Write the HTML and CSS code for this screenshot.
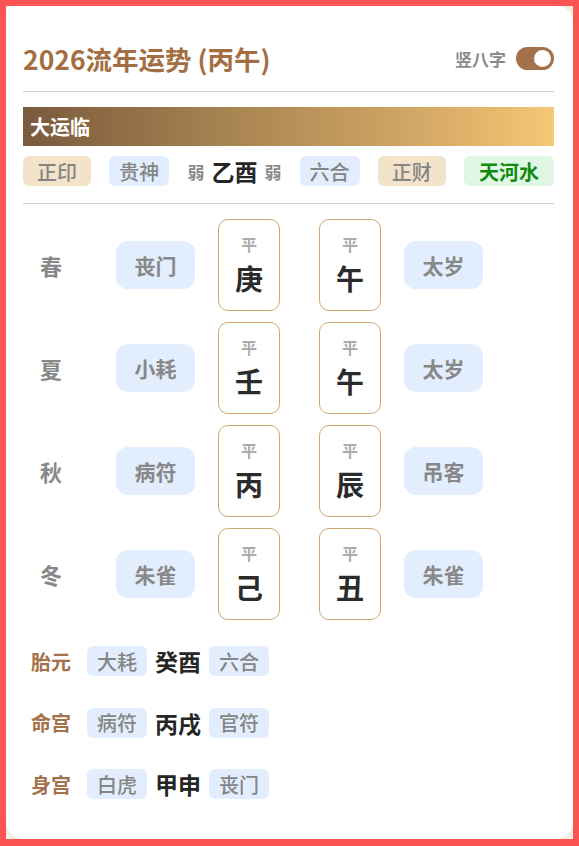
FILE: index.html
```html
<!DOCTYPE html>
<html lang="zh-CN">
<head>
    <meta charset="UTF-8">
    <title>2026流年运势</title>
    <link rel="stylesheet" href="styles.css">
</head>
<body>
<div class="frame">
    <div class="card">
        <div class="header">
            <h1>2026流年运势 (丙午)</h1>
            <div class="switch-box">
                <span>竖八字</span>
                <span class="toggle"><span class="knob"></span></span>
            </div>
        </div>

        <div class="dayun-bar">大运临</div>
        <div class="dayun-tags">
            <span class="tag tag-gold wide">正印</span>
            <span class="tag tag-blue">贵神</span>
            <span class="gz-group">
                <span class="weak">弱</span>
                <span class="gz">乙酉</span>
                <span class="weak">弱</span>
            </span>
            <span class="tag tag-blue">六合</span>
            <span class="tag tag-gold wide">正财</span>
            <span class="tag tag-green">天河水</span>
        </div>

        <div class="seasons">
            <div class="season-row">
                <span class="season">春</span>
                <span class="star">丧门</span>
                <div class="pillar"><span class="state">平</span><span class="char">庚</span></div>
                <div class="pillar"><span class="state">平</span><span class="char">午</span></div>
                <span class="star">太岁</span>
            </div>
            <div class="season-row">
                <span class="season">夏</span>
                <span class="star">小耗</span>
                <div class="pillar"><span class="state">平</span><span class="char">壬</span></div>
                <div class="pillar"><span class="state">平</span><span class="char">午</span></div>
                <span class="star">太岁</span>
            </div>
            <div class="season-row">
                <span class="season">秋</span>
                <span class="star">病符</span>
                <div class="pillar"><span class="state">平</span><span class="char">丙</span></div>
                <div class="pillar"><span class="state">平</span><span class="char">辰</span></div>
                <span class="star">吊客</span>
            </div>
            <div class="season-row">
                <span class="season">冬</span>
                <span class="star">朱雀</span>
                <div class="pillar"><span class="state">平</span><span class="char">己</span></div>
                <div class="pillar"><span class="state">平</span><span class="char">丑</span></div>
                <span class="star">朱雀</span>
            </div>
        </div>

        <div class="palaces">
            <div class="palace-row">
                <span class="palace">胎元</span>
                <span class="tag tag-blue">大耗</span>
                <span class="gz-small">癸酉</span>
                <span class="tag tag-blue">六合</span>
            </div>
            <div class="palace-row">
                <span class="palace">命宫</span>
                <span class="tag tag-blue">病符</span>
                <span class="gz-small">丙戌</span>
                <span class="tag tag-blue">官符</span>
            </div>
            <div class="palace-row">
                <span class="palace">身宫</span>
                <span class="tag tag-blue">白虎</span>
                <span class="gz-small">甲申</span>
                <span class="tag tag-blue">丧门</span>
            </div>
        </div>
    </div>
</div>
</body>
</html>
```

FILE: styles.css
```css
html, body{
    margin: 0;
    padding: 0;
    background: #fe5353;
    font-family: "Noto Sans CJK SC", "Noto Sans", sans-serif;
}

.frame{
    margin: 6px 6px 7px 6px;
    height: 833px;
    background: #f4ede1;
}

.card{
    background: #fff;
    height: 100%;
    box-sizing: border-box;
    border-radius: 4px 16px 18px 18px;
    padding: 29px 19px 0 17px;
}

/* header */
.header{
    display: flex;
    align-items: center;
    justify-content: space-between;
    height: 46px;
    padding-bottom: 10px;
    border-bottom: 1px solid #cfcfcf;
}

.header h1{
    margin: 0;
    font-size: 26.5px;
    font-weight: 700;
    color: #a36f42;
}

.switch-box{
    display: flex;
    align-items: center;
    gap: 10px;
    font-size: 17px;
    font-weight: 700;
    color: #8a8a8a;
}

.toggle{
    width: 38px;
    height: 23px;
    border-radius: 12px;
    background: #a4714a;
    position: relative;
}

.knob{
    position: absolute;
    right: 3px;
    top: 3px;
    width: 17px;
    height: 17px;
    border-radius: 50%;
    background: #fff;
}

/* da yun */
.dayun-bar{
    margin-top: 15px;
    height: 39px;
    line-height: 39px;
    padding-left: 7px;
    background: linear-gradient(90deg, #7a5a3d 0%, #a3804f 35%, #d4a866 75%, #f6c774 100%);
    color: #fff;
    font-size: 20px;
    font-weight: 700;
}

.dayun-tags{
    display: flex;
    align-items: center;
    justify-content: space-between;
    height: 30px;
    margin-top: 10px;
    padding-bottom: 17px;
    border-bottom: 1px solid #cfcfcf;
}

.tag{
    display: inline-flex;
    align-items: center;
    justify-content: center;
    height: 30px;
    padding: 0 10px;
    border-radius: 6px;
    font-size: 20px;
    font-weight: 500;
    color: #858585;
}

.tag.wide{
    padding: 0 14px;
}

.tag-gold{
    background: #f3e3c9;
}

.tag-blue{
    background: #e2eefd;
}

.tag-green{
    background: #dff7e3;
    color: #108a10;
    font-weight: 700;
    padding: 0 15px;
}

.gz-group{
    display: flex;
    align-items: center;
    gap: 7px;
    height: 30px;
}

.weak{
    font-size: 17px;
    font-weight: 700;
    color: #8a8a8a;
}

.gz{
    font-size: 23px;
    line-height: 30px;
    font-weight: 700;
    color: #262626;
}

/* seasons */
.seasons{
    display: flex;
    flex-direction: column;
    gap: 11px;
    margin-top: 15px;
}

.season-row{
    display: flex;
    align-items: center;
    gap: 23px;
}

.season{
    width: 53px;
    padding-left: 17px;
    font-size: 22px;
    font-weight: 700;
    color: #888;
}

.star{
    display: flex;
    align-items: center;
    justify-content: center;
    width: 79px;
    height: 48px;
    border-radius: 12px;
    background: #e2eefd;
    font-size: 21px;
    font-weight: 700;
    color: #888;
}

.pillar{
    width: 62px;
    height: 92px;
    box-sizing: border-box;
    border: 1px solid #cda673;
    border-radius: 10px;
    display: flex;
    flex-direction: column;
    align-items: center;
    padding-top: 13px;
}

.pillar + .pillar{
    margin-left: 16px;
}

.state{
    font-size: 16px;
    line-height: 22px;
    font-weight: 700;
    color: #acacac;
}

.char{
    margin-top: 5px;
    font-size: 28px;
    line-height: 36px;
    font-weight: 700;
    color: #2b2b2b;
}

/* palaces */
.palaces{
    display: flex;
    flex-direction: column;
    gap: 31.5px;
    margin-top: 26px;
}

.palace-row{
    display: flex;
    align-items: center;
    gap: 8px;
    height: 30px;
}

.palace{
    width: 56px;
    padding-left: 8px;
    box-sizing: border-box;
    font-size: 20px;
    font-weight: 700;
    color: #a5714a;
}

.gz-small{
    font-size: 23px;
    line-height: 30px;
    font-weight: 700;
    color: #262626;
}
```
